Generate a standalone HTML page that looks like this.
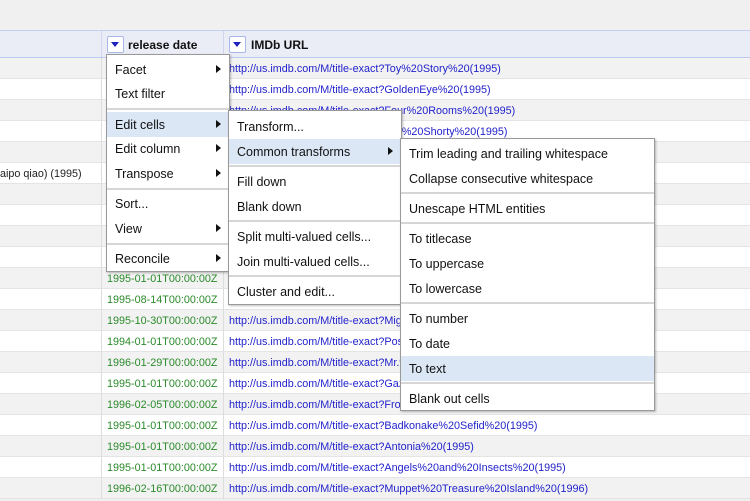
<!DOCTYPE html>
<html><head><style>
body{margin:0;width:750px;height:497px;overflow:hidden;background:#f0f0f0;font-family:"Liberation Sans",sans-serif;position:relative}
.hdr{position:absolute;left:0;top:30px;width:750px;height:26px;background:#eaecf6;border-top:1px solid #c4d0f2;border-bottom:2px solid #bccaf0}
.hcol{position:absolute;top:0;height:26px;border-left:1px solid #cfd6ee}
.btn{position:absolute;top:5px;width:15px;height:15px;background:#fff;border:1px solid #a9b8e8;border-radius:2px}
.btn:after{content:"";position:absolute;left:3px;top:5px;border-left:4.5px solid transparent;border-right:4.5px solid transparent;border-top:5px solid #2020c0}
.hl{position:absolute;top:7px;font-size:12px;font-weight:bold;color:#111}
.row{position:absolute;left:0;width:750px;height:21px;font-size:10.8px;line-height:23px;border-bottom:1px solid #e4e4e4;box-sizing:border-box}
.row .d{position:absolute;left:107px;color:#2a8a2a}
.row .u{position:absolute;left:229px;color:#2222cc}
.row .l{position:absolute;left:0;color:#222}
.row:before{content:"";position:absolute;left:101px;top:0;height:21px;border-left:1px solid #ddd}
.row:after{content:"";position:absolute;left:223px;top:0;height:21px;border-left:1px solid #ddd}
.menu{position:absolute;background:#fff;border:1px solid #999;box-shadow:1px 1px 2px rgba(0,0,0,.25);font-size:12.5px;color:#111}
.it{position:absolute;left:0;right:0;height:25px;line-height:26px;padding-left:8px}
.it.h{background:#dce7f6}
.ar{position:absolute;right:8px;top:8px;border-top:4.5px solid transparent;border-bottom:4.5px solid transparent;border-left:5px solid #111}
.sep{position:absolute;left:0;right:0;height:0;border-top:2px solid #d6d6d6}
</style></head><body>
<div class="hdr">
<div class="hcol" style="left:101px;width:122px"><div class="btn" style="left:5px"></div><div class="hl" style="left:26px">release date</div></div>
<div class="hcol" style="left:223px;width:527px"><div class="btn" style="left:5px"></div><div class="hl" style="left:27px">IMDb URL</div></div>
</div>
<div class="row" style="top:58px;background:#f2f2f2"><span class="u">http://us.imdb.com/M/title-exact?Toy%20Story%20(1995)</span></div>
<div class="row" style="top:79px;background:#fff"><span class="u">http://us.imdb.com/M/title-exact?GoldenEye%20(1995)</span></div>
<div class="row" style="top:100px;background:#f2f2f2"><span class="u">http://us.imdb.com/M/title-exact?Four%20Rooms%20(1995)</span></div>
<div class="row" style="top:121px;background:#fff"><span class="u">http://us.imdb.com/M/title-exact?Get%20Shorty%20(1995)</span></div>
<div class="row" style="top:142px;background:#f2f2f2"></div>
<div class="row" style="top:163px;background:#fff"><span class="l">aipo qiao) (1995)</span></div>
<div class="row" style="top:184px;background:#f2f2f2"></div>
<div class="row" style="top:205px;background:#fff"></div>
<div class="row" style="top:226px;background:#f2f2f2"></div>
<div class="row" style="top:247px;background:#fff"></div>
<div class="row" style="top:268px;background:#f2f2f2"><span class="d">1995-01-01T00:00:00Z</span></div>
<div class="row" style="top:289px;background:#fff"><span class="d">1995-08-14T00:00:00Z</span></div>
<div class="row" style="top:310px;background:#f2f2f2"><span class="d">1995-10-30T00:00:00Z</span><span class="u">http://us.imdb.com/M/title-exact?Mighty%20Aphrodite%20(1995)</span></div>
<div class="row" style="top:331px;background:#fff"><span class="d">1994-01-01T00:00:00Z</span><span class="u">http://us.imdb.com/M/title-exact?Postino,%20Il%20(1994)</span></div>
<div class="row" style="top:352px;background:#f2f2f2"><span class="d">1996-01-29T00:00:00Z</span><span class="u">http://us.imdb.com/M/title-exact?Mr.%20Holland's%20Opus</span></div>
<div class="row" style="top:373px;background:#fff"><span class="d">1995-01-01T00:00:00Z</span><span class="u">http://us.imdb.com/M/title-exact?Gazon%20maudit%20(1995)</span></div>
<div class="row" style="top:394px;background:#f2f2f2"><span class="d">1996-02-05T00:00:00Z</span><span class="u">http://us.imdb.com/M/title-exact?From%20Dusk%20(1996)</span></div>
<div class="row" style="top:415px;background:#fff"><span class="d">1995-01-01T00:00:00Z</span><span class="u">http://us.imdb.com/M/title-exact?Badkonake%20Sefid%20(1995)</span></div>
<div class="row" style="top:436px;background:#f2f2f2"><span class="d">1995-01-01T00:00:00Z</span><span class="u">http://us.imdb.com/M/title-exact?Antonia%20(1995)</span></div>
<div class="row" style="top:457px;background:#fff"><span class="d">1995-01-01T00:00:00Z</span><span class="u">http://us.imdb.com/M/title-exact?Angels%20and%20Insects%20(1995)</span></div>
<div class="row" style="top:478px;background:#f2f2f2"><span class="d">1996-02-16T00:00:00Z</span><span class="u">http://us.imdb.com/M/title-exact?Muppet%20Treasure%20Island%20(1996)</span></div>

<div class="menu" style="left:106px;top:54px;width:122px;height:216px">
<div class="it" style="top:2px">Facet<span class="ar"></span></div>
<div class="it" style="top:26px">Text filter</div>
<div class="sep" style="top:53px"></div>
<div class="it h" style="top:57px">Edit cells<span class="ar"></span></div>
<div class="it" style="top:81px">Edit column<span class="ar"></span></div>
<div class="it" style="top:106px">Transpose<span class="ar"></span></div>
<div class="sep" style="top:133px"></div>
<div class="it" style="top:136px">Sort...</div>
<div class="it" style="top:161px">View<span class="ar"></span></div>
<div class="sep" style="top:188px"></div>
<div class="it" style="top:191px">Reconcile<span class="ar"></span></div>
</div>

<div class="menu" style="left:228px;top:110px;width:172px;height:193px">
<div class="it" style="top:3px">Transform...</div>
<div class="it h" style="top:28px">Common transforms<span class="ar"></span></div>
<div class="sep" style="top:54px"></div>
<div class="it" style="top:58px">Fill down</div>
<div class="it" style="top:83px">Blank down</div>
<div class="sep" style="top:109px"></div>
<div class="it" style="top:113px">Split multi-valued cells...</div>
<div class="it" style="top:138px">Join multi-valued cells...</div>
<div class="sep" style="top:164px"></div>
<div class="it" style="top:168px">Cluster and edit...</div>
</div>

<div class="menu" style="left:400px;top:138px;width:253px;height:271px">
<div class="it" style="top:2px">Trim leading and trailing whitespace</div>
<div class="it" style="top:27px">Collapse consecutive whitespace</div>
<div class="sep" style="top:53px"></div>
<div class="it" style="top:57px">Unescape HTML entities</div>
<div class="sep" style="top:83px"></div>
<div class="it" style="top:87px">To titlecase</div>
<div class="it" style="top:112px">To uppercase</div>
<div class="it" style="top:137px">To lowercase</div>
<div class="sep" style="top:163px"></div>
<div class="it" style="top:167px">To number</div>
<div class="it" style="top:192px">To date</div>
<div class="it h" style="top:217px">To text</div>
<div class="sep" style="top:243px"></div>
<div class="it" style="top:247px">Blank out cells</div>
</div>
</body></html>
